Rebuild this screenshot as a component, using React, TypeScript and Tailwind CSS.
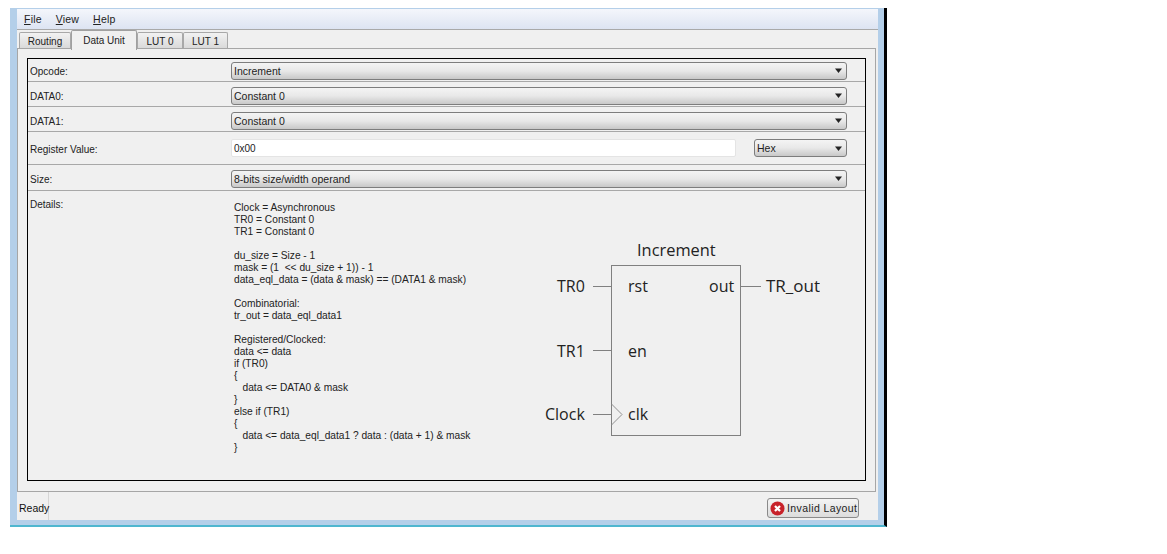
const labelFont = "font-['Liberation_Sans',sans-serif] text-[10px] text-[#222]"

function Arrow() {
  return (
    <svg width="7" height="5" viewBox="0 0 7 5" className="shrink-0">
      <path d="M0 0.5 H7 L3.5 5 Z" fill="#222" />
    </svg>
  )
}

function Combo({ value, className }: { value: string; className: string }) {
  return (
    <div
      className={`flex h-[18px] items-center justify-between rounded-[3px] border border-[#7d7d7d] bg-gradient-to-b from-[#f4f4f4] via-[#e8e8e8] to-[#c8c8c8] pl-[2px] pr-[4px] ${className}`}
    >
      <span className="pt-[1px] text-[10.5px] leading-none text-[#222]">{value}</span>
      <Arrow />
    </div>
  )
}

function Row({ label, height, children }: { label: string; height: string; children: React.ReactNode }) {
  return (
    <div className={`flex items-center border-b border-[#a8a8a8] ${height}`}>
      <div className="w-[203px] shrink-0 pl-[2px] pt-[2px]">{label}</div>
      {children}
    </div>
  )
}

function Tab({ label, active, className }: { label: string; active?: boolean; className: string }) {
  if (active) {
    return (
      <div className={`z-10 flex h-[20px] items-center justify-center rounded-t-[2px] border border-b-0 border-[#a0a0a0] bg-[#f0f0f0] ${className}`}>
        {label}
      </div>
    )
  }
  return (
    <div className={`mt-[2px] flex h-[17px] items-center justify-center rounded-t-[2px] border border-b-0 border-[#a8a8a8] bg-gradient-to-b from-[#f2f2f2] to-[#d8d8d8] pt-[1px] ${className}`}>
      {label}
    </div>
  )
}

const details = [
  "Clock = Asynchronous",
  "TR0 = Constant 0",
  "TR1 = Constant 0",
  "",
  "du_size = Size - 1",
  "mask = (1  << du_size + 1)) - 1",
  "data_eql_data = (data & mask) == (DATA1 & mask)",
  "",
  "Combinatorial:",
  "tr_out = data_eql_data1",
  "",
  "Registered/Clocked:",
  "data <= data",
  "if (TR0)",
  "{",
  "   data <= DATA0 & mask",
  "}",
  "else if (TR1)",
  "{",
  "   data <= data_eql_data1 ? data : (data + 1) & mask",
  "}",
]

function Diagram() {
  const text = { fontFamily: "'Open Sans', sans-serif", fontSize: 16, fill: "#222" }
  return (
    <svg width="290" height="215" viewBox="0 0 290 215" className="shrink-0">
      <text x="107" y="24" {...text} fontSize={16.4}>Increment</text>
      <rect x="81.5" y="33.5" width="129" height="170" fill="none" stroke="#808080" />
      <text x="27" y="60" {...text}>TR0</text>
      <text x="27" y="125" {...text}>TR1</text>
      <text x="15" y="188" {...text}>Clock</text>
      <text x="98" y="60" {...text}>rst</text>
      <text x="98" y="125" {...text}>en</text>
      <text x="98" y="188" {...text}>clk</text>
      <text x="179" y="60" {...text}>out</text>
      <text x="236" y="60" {...text} fontSize={17}>TR_out</text>
      <path d="M63 54.5H81M63 118.5H81M63 182.5H81M211 54.5H231" stroke="#808080" fill="none" />
      <path d="M81.5 172L92 182.5L81.5 193" stroke="#909090" fill="none" />
    </svg>
  )
}

function ErrorIcon() {
  return (
    <svg width="15" height="15" viewBox="0 0 16 16" className="shrink-0">
      <circle cx="8" cy="8" r="7.5" fill="#c8222a" />
      <path d="M5.3 5.3L10.7 10.7M10.7 5.3L5.3 10.7" stroke="#fff" strokeWidth="2.4" />
    </svg>
  )
}

export default function App() {
  return (
    <div className="h-[554px] w-[1167px] bg-white pl-[10px] pt-[8px]">
      <div className={`flex h-[519px] w-[877px] flex-col border-r-[3px] border-b-[2px] border-r-black border-b-[#4fb6cf] bg-[#b4cfe9] pl-[7px] pr-[6px] pb-[5px] pt-[1px] ${labelFont}`}>
        {/* Menu */}
        <div className="flex h-[21px] shrink-0 items-center gap-[14px] border-b border-[#a9a9a9] bg-gradient-to-b from-[#f4f6fb] to-[#dde4f2] pl-[7px] pt-[1px] text-[10.5px] tracking-[0.2px]">
          <span><span className="underline">F</span>ile</span>
          <span><span className="underline">V</span>iew</span>
          <span><span className="underline">H</span>elp</span>
        </div>

        <div className="flex min-h-0 flex-1 flex-col bg-[#f0f0f0]">
          {/* Tabs */}
          <div className="-mb-px flex h-[19px] shrink-0 pl-[2px]">
            <Tab label="Routing" className="w-[52px]" />
            <Tab active label="Data Unit" className="w-[66px]" />
            <Tab label="LUT 0" className="w-[46px]" />
            <Tab label="LUT 1" className="w-[45px]" />
          </div>

          {/* Pane */}
          <div className="mr-[2px] h-[444px] shrink-0 border border-[#a6a6a6] p-[9px]">
            <div className="h-[423px] border border-black">
              <Row label="Opcode:" height="h-[23px] pt-[1px]">
                <Combo value="Increment" className="w-[616px]" />
              </Row>
              <Row label="DATA0:" height="h-[25px] pt-[3px]">
                <Combo value="Constant 0" className="w-[616px]" />
              </Row>
              <Row label="DATA1:" height="h-[25px] pt-[3px]">
                <Combo value="Constant 0" className="w-[616px]" />
              </Row>
              <Row label="Register Value:" height="h-[33px]">
                <div className="flex h-[18px] w-[505px] items-center rounded-[2px] border border-[#e4e4e4] bg-white pl-[2px] pt-[1px]">0x00</div>
                <Combo value="Hex" className="ml-[18px] w-[93px]" />
              </Row>
              <Row label="Size:" height="h-[26px] pt-[2px]">
                <Combo value="8-bits size/width operand" className="w-[616px]" />
              </Row>
              <div className="flex pt-[6px]">
                <div className="w-[206px] shrink-0 pl-[2px]">Details:</div>
                <div className="w-[296px] shrink-0 whitespace-pre pt-[5px] text-[10.2px] leading-[12px]">
                  {details.map((line, i) => (
                    <div key={i} className="h-[12px]">{line}</div>
                  ))}
                </div>
                <div className="pt-[35px]">
                  <Diagram />
                </div>
              </div>
            </div>
          </div>

          {/* Status */}
          <div className="flex min-h-0 flex-1 items-center justify-between pr-[19px]">
            <div className="flex h-full w-[32px] items-center border-r border-[#d6d6d6] pl-[2px] pt-[5px] text-[10.5px] text-[#111]">Ready</div>
            <div className="mt-[4px] flex h-[20px] w-[92px] items-center gap-[2px] rounded-[3px] border border-[#8a8a8a] bg-gradient-to-b from-[#f4f4f4] to-[#dcdcdc] pl-[2px] pt-[1px]">
              <ErrorIcon />
              <span className="whitespace-nowrap text-[10.5px] tracking-[0.4px]">Invalid Layout</span>
            </div>
          </div>
        </div>
      </div>
    </div>
  )
}
